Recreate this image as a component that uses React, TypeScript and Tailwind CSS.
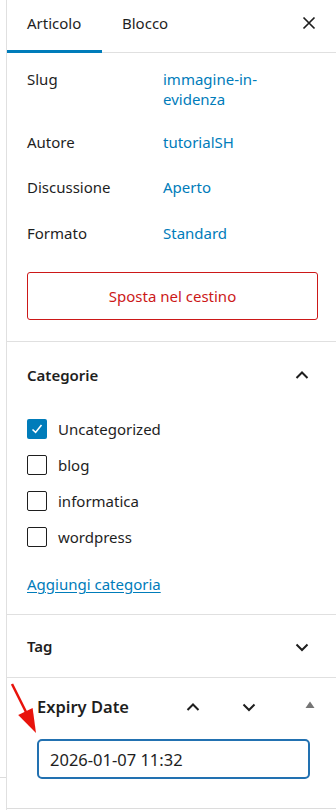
import { useState } from 'react'

const font = { fontFamily: '"Noto Sans", "Open Sans", Arial, sans-serif' }

function Chevron({ up, className }: { up?: boolean; className?: string }) {
  return (
    <svg width="24" height="24" viewBox="0 0 24 24" className={className} fill="none">
      <path
        d={up ? 'M6.5 15 L12 9.5 L17.5 15' : 'M6.5 9.5 L12 15 L17.5 9.5'}
        stroke="#1e1e1e"
        strokeWidth="2"
      />
    </svg>
  )
}

function MetaRow({ label, value }: { label: string; value: React.ReactNode }) {
  return (
    <div className="flex text-[15px] leading-[20px]">
      <div className="w-[136px] shrink-0 text-[#1e1e1e]">{label}</div>
      <div className="text-[#007cba]">{value}</div>
    </div>
  )
}

function Check({ label, checked }: { label: string; checked?: boolean }) {
  return (
    <div className="h-[36px] flex items-center gap-[11px]">
      {checked ? (
        <span className="w-[20px] h-[20px] rounded-[2px] bg-[#007cba] flex items-center justify-center">
          <svg width="14" height="14" viewBox="0 0 14 14" fill="none">
            <path d="M2.5 7.5 L5.6 10.4 L11.5 3" stroke="white" strokeWidth="1.6" />
          </svg>
        </span>
      ) : (
        <span className="w-[20px] h-[20px] rounded-[2px] border-[1.5px] border-[#1e1e1e] bg-white" />
      )}
      <span className="text-[15px] text-[#1e1e1e]">{label}</span>
    </div>
  )
}

export default function App() {
  const [date, setDate] = useState('2026-01-07 11:32')

  return (
    <div className="w-[336px] h-[810px] bg-white flex overflow-hidden" style={font}>
      {/* left gutter */}
      <div className="w-[6px] shrink-0 flex flex-col">
        <div className="h-[777px]" />
        <div className="border-t border-[#dcdcdc]" />
      </div>

      <div className="flex-1 flex flex-col border-l border-[#e0e0e0] relative">
        {/* tabs */}
        <div className="h-[53px] shrink-0 flex items-stretch border-b border-[#e0e0e0]">
          <div className="w-[95px] px-5 flex items-center text-[15px] text-[#1e1e1e] border-b-[3px] border-[#007cba] -mb-px pb-[4px]">
            Articolo
          </div>
          <div className="px-5 flex items-center text-[15px] text-[#1e1e1e] pb-[6px]">Blocco</div>
          <div className="flex-1" />
          <div className="w-[48px] flex items-center justify-center pr-[6px] pb-[6px]">
            <svg width="14" height="14" viewBox="0 0 14 14" fill="none">
              <path d="M1.5 1.5 L12.5 12.5 M12.5 1.5 L1.5 12.5" stroke="#1e1e1e" strokeWidth="1.7" />
            </svg>
          </div>
        </div>

        {/* post summary */}
        <div className="px-5 pr-[18px] pt-[16px] pb-[21px] border-b border-[#e0e0e0]">
          <MetaRow
            label="Slug"
            value={
              <>
                immagine-in-
                <br />
                evidenza
              </>
            }
          />
          <div className="mt-[23px]">
            <MetaRow label="Autore" value="tutorialSH" />
          </div>
          <div className="mt-[25px]">
            <MetaRow label="Discussione" value="Aperto" />
          </div>
          <div className="mt-[26px]">
            <MetaRow label="Formato" value="Standard" />
          </div>
          <button className="mt-[29px] w-full h-[48px] rounded-[3px] border border-[#cc1818] text-[#cc1818] text-[15px]">
            Sposta nel cestino
          </button>
        </div>

        {/* categorie */}
        <div className="px-5 pb-[20px] border-b border-[#e0e0e0]">
          <div className="h-[66px] flex items-center justify-between">
            <span className="text-[15px] font-semibold text-[#1e1e1e]">Categorie</span>
            <Chevron up className="mr-[2px]" />
          </div>
          <div className="mt-[3px]">
            <Check label="Uncategorized" checked />
            <Check label="blog" />
            <Check label="informatica" />
            <Check label="wordpress" />
          </div>
          <div className="mt-[19px] text-[15px] leading-[20px] text-[#007cba] underline underline-offset-2">
            Aggiungi categoria
          </div>
        </div>

        {/* tag */}
        <div className="h-[63px] px-5 flex items-center justify-between border-b border-[#e0e0e0]">
          <span className="text-[15px] font-semibold text-[#1e1e1e]">Tag</span>
          <Chevron className="mr-[2px] mt-[2px]" />
        </div>

        {/* expiry date */}
        <div className="pl-[30px] pr-[25px] flex-1 flex flex-col border-b border-[#dcdcdc]">
          <div className="h-[58px] flex items-center">
            <span className="text-[16.5px] font-semibold text-[#1e1e1e]">Expiry Date</span>
            <div className="flex-1" />
            <div className="flex items-center">
              <Chevron up />
              <Chevron className="ml-[32px]" />
              <svg width="10" height="8" viewBox="0 0 10 8" className="ml-[44px] mr-[-4px] mb-[4px]">
                <path d="M5 0.5 L9.5 7 L0.5 7 Z" fill="#757575" />
              </svg>
            </div>
          </div>
          <input
            value={date}
            onChange={(e) => setDate(e.target.value)}
            className="mt-[3px] w-[273px] h-[40px] rounded-[5px] border-2 border-[#2271b1] px-[11px] text-[16.5px] text-[#1e1e1e] outline-none"
            style={font}
          />
        </div>
        <div className="h-[1px]" />
      </div>

      {/* annotation arrow */}
      <svg className="absolute left-0 top-0 pointer-events-none" width="60" height="810" viewBox="0 0 60 810">
        <line x1="12" y1="684" x2="27" y2="714" stroke="#e8130c" strokeWidth="2.5" />
        <path d="M36 733 L32.6 707.9 L18.2 714.9 Z" fill="#e8130c" />
      </svg>
    </div>
  )
}
